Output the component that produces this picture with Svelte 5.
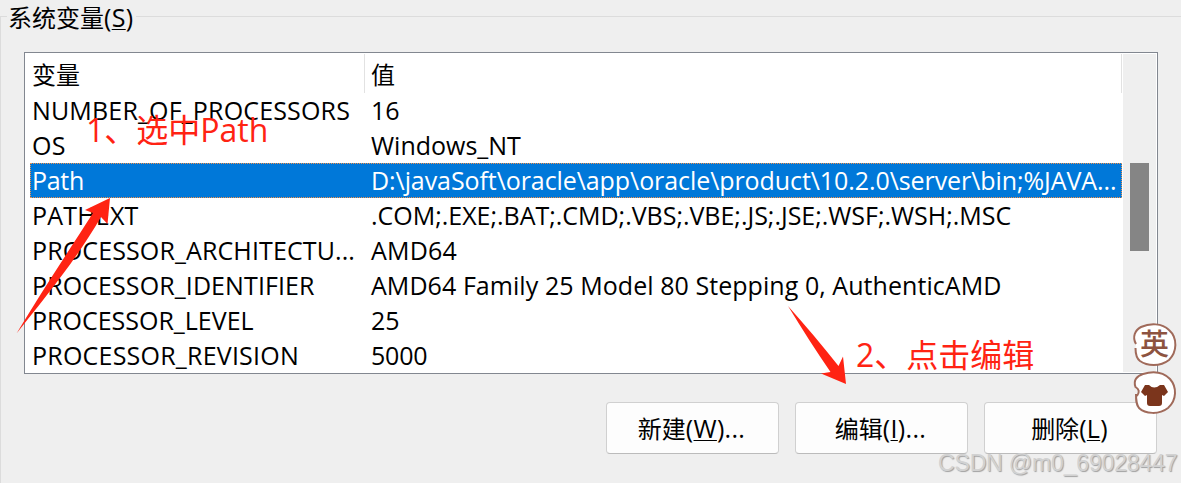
<script lang="ts">
  interface Variable {
    name: string;
    value: string;
    nameSpacing?: number;
    valueSpacing?: number;
  }

  const variables: Variable[] = [
    { name: 'NUMBER_OF_PROCESSORS', value: '16', nameSpacing: 0.16 },
    { name: 'OS', value: 'Windows_NT', nameSpacing: 0.3 },
    {
      name: 'Path',
      value: 'D:\\javaSoft\\oracle\\app\\oracle\\product\\10.2.0\\server\\bin;%JAVA...',
      nameSpacing: -0.3,
      valueSpacing: -0.08
    },
    {
      name: 'PATHEXT',
      value: '.COM;.EXE;.BAT;.CMD;.VBS;.VBE;.JS;.JSE;.WSF;.WSH;.MSC',
      nameSpacing: 0.2,
      valueSpacing: -0.02
    },
    { name: 'PROCESSOR_ARCHITECTU...', value: 'AMD64', nameSpacing: 0.12, valueSpacing: 0.2 },
    {
      name: 'PROCESSOR_IDENTIFIER',
      value: 'AMD64 Family 25 Model 80 Stepping 0, AuthenticAMD',
      nameSpacing: 0.1,
      valueSpacing: 0.06
    },
    { name: 'PROCESSOR_LEVEL', value: '25' },
    { name: 'PROCESSOR_REVISION', value: '5000', nameSpacing: 0.22, valueSpacing: -0.2 }
  ];

  const buttons = [
    { label: '新建', key: 'W', more: true },
    { label: '编辑', key: 'I', more: true },
    { label: '删除', key: 'L', more: false }
  ];

  let selected = $state('Path');
</script>

<main class="dialog">
  <section class="group">
    <header class="legend">
      <h2>系统变量<span class="latin">(<u>S</u>)</span></h2>
    </header>

    <div class="list">
      <div class="table">
        <div class="row head">
          <span class="cell">变量</span>
          <span class="cell">值</span>
        </div>
        {#each variables as item}
          <div
            class="row"
            class:selected={item.name === selected}
            onclick={() => (selected = item.name)}
            role="presentation"
          >
            <span class="cell" style:letter-spacing="{item.nameSpacing ?? 0}px">{item.name}</span>
            <span class="cell" style:letter-spacing="{item.valueSpacing ?? 0}px">{item.value}</span>
          </div>
        {/each}
      </div>
      <div class="scrollbar"><div class="thumb"></div></div>
    </div>

    <footer class="actions">
      {#each buttons as button}
        <button>{button.label}<span class="latin">(<u>{button.key}</u>){button.more ? '...' : ''}</span></button>
      {/each}
    </footer>
  </section>

  <svg class="overlay" width="1181" height="483" viewBox="0 0 1181 483" aria-hidden="true">
    <g fill="#ff2313">
      <path d="M110 198 L85 210 L93 213 C70 249 42 291 16.500 333.500 C44 299 76 260 101 217 L107.500 224 Z" />
      <path d="M788 306 C802 329 816 351 830.500 372 L821 373.500 L846 384 L843 356.500 L838.500 366 C822 345 805 325 788 306 Z" />
    </g>
    <g fill="#fff" stroke="#a06a5a" stroke-width="2">
      <path d="M1136 344 C1132 337 1135 330 1141 327 C1150 323 1162 323 1169 330 C1178 338 1177 352 1169 360 C1160 367 1147 366 1140 361 C1136 358 1135.500 353 1135.500 348" />
      <path d="M1137 396 C1140 392 1139 389 1135.500 387 C1133 380 1137 376 1143 374 C1153 371 1163 372 1170 379 C1177 387 1177 400 1168 408 C1159 415 1145 414 1139 408 C1136 404 1136 400 1136 394" />
    </g>
    <path
      fill="#7b351c"
      d="M1149 385 Q1154 390 1160 385 L1164 385 L1168 392 L1164 396 L1162 395 L1162 403 Q1162 406 1159 406 L1150 406 Q1147 406 1147 403 L1147 395 L1145 396 L1141 392 L1145 385 Z"
    />
  </svg>
  <span class="note first">1、选中Path</span>
  <span class="note second">2、点击编辑</span>
  <span class="lang">英</span>
  <span class="watermark">CSDN @m0_69028447</span>
</main>

<style>
  :global(body) {
    margin: 0;
    background: #efefef;
  }
  .dialog {
    position: relative;
    width: 1181px;
    height: 483px;
    box-sizing: border-box;
    padding-top: 16px;
    overflow: hidden;
    background: #efefef;
    color: #000;
    font: 25px/35px 'Open Sans', 'Noto Sans CJK SC', sans-serif;
  }
  .group {
    height: 467px;
    box-sizing: border-box;
    border-top: 1px solid #dcdcdc;
    border-left: 1px solid #dcdcdc;
    padding: 0 23px;
  }
  .legend {
    display: flex;
    align-items: flex-start;
    height: 35px;
    margin-left: -17px;
  }
  h2 {
    margin: -17px 0 0;
    padding: 0 3px 0 1px;
    background: #efefef;
    font-size: 24px;
    font-weight: 400;
    line-height: 35px;
  }
  .latin {
    font-size: 25px;
    line-height: 1;
    letter-spacing: 0.3px;
  }
  u {
    text-decoration-thickness: 1px;
    text-underline-offset: 2px;
  }
  .list {
    display: flex;
    width: 1134px;
    height: 322px;
    box-sizing: border-box;
    border: 1px solid #828790;
    padding: 1px;
    background: #fff;
  }
  .table {
    width: 1097px;
    padding-left: 4px;
    box-sizing: border-box;
  }
  .row {
    display: grid;
    grid-template-columns: 339px 1fr;
    height: 35px;
    width: 1092px;
    box-sizing: border-box;
    white-space: pre;
  }
  .cell {
    padding-left: 2px;
    overflow: hidden;
  }
  .head {
    height: 39px;
    grid-template-columns: 335px 1fr;
    font-size: 24px;
  }
  .head .cell {
    border-right: 1px solid #e2e2e2;
    line-height: 41px;
  }
  .head .cell + .cell {
    padding-left: 6px;
  }
  .selected {
    background: #0078d9;
    color: #fff;
    outline: 1px dotted #f2914b;
    outline-offset: -1px;
  }
  .scrollbar {
    width: 33px;
    background: #efefef;
  }
  .thumb {
    width: 19px;
    height: 88px;
    margin: 109px 0 0 7px;
    background: #858585;
  }
  .actions {
    display: flex;
    gap: 16px;
    margin: 28px 0 0 582px;
  }
  button {
    width: 173px;
    height: 52px;
    flex: none;
    padding: 0 2px 0 0;
    border: 1px solid #d0d0d0;
    border-bottom-color: #bbb;
    border-radius: 4px;
    background: #fdfdfd;
    color: #000;
    font: inherit;
    font-size: 24px;
  }
  .overlay {
    position: absolute;
    inset: 0;
    pointer-events: none;
  }
  .note,
  .lang,
  .watermark {
    position: absolute;
    white-space: nowrap;
  }
  .note {
    color: #ff2313;
    font-size: 32px;
    line-height: 44px;
  }
  .first {
    left: 86px;
    top: 108px;
  }
  .second {
    left: 856px;
    top: 333px;
  }
  .lang {
    left: 1140px;
    top: 328px;
    color: #8d5340;
    font-size: 29px;
    font-weight: 500;
    line-height: 32px;
  }
  .watermark {
    left: 938px;
    top: 448px;
    color: #d2d2d2;
    font: 23px/30px 'Liberation Sans', sans-serif;
    letter-spacing: -0.15px;
    text-shadow: 1px 1px 1px #a0a0a0;
  }
</style>
